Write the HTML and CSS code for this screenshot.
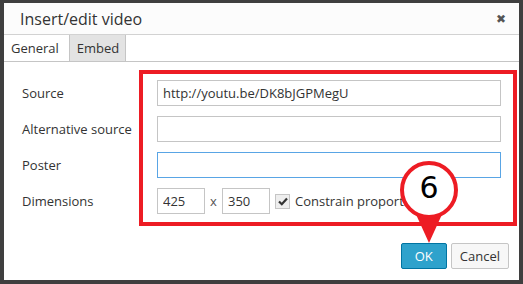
FILE: index.html
```html
<!DOCTYPE html>
<html lang="en">
  <head>
    <meta charset="UTF-8" />
    <title>Insert/edit video</title>
    <link rel="stylesheet" href="styles.css">
  </head>
  <body>
    <div class="dialog">
      <!-- Header -->
      <div class="dialog-head">
        <span class="dialog-title">Insert/edit video</span>
        <span class="close">&#10006;</span>
      </div>

      <!-- Tabs -->
      <div class="tabs">
        <span class="tab active">General</span>
        <span class="tab">Embed</span>
      </div>

      <!-- Form -->
      <div class="form">
        <div class="row">
          <label>Source</label>
          <input class="field" type="text" value="http://youtu.be/DK8bJGPMegU" />
        </div>
        <div class="row">
          <label>Alternative source</label>
          <input class="field" type="text" />
        </div>
        <div class="row">
          <label>Poster</label>
          <input class="field focus" type="text" />
        </div>
        <div class="row">
          <label>Dimensions</label>
          <input class="field small" type="text" value="425" />
          <span class="times">x</span>
          <input class="field small" type="text" value="350" />
          <span class="check">
            <svg width="10" height="9" viewBox="0 0 10 9">
              <path d="M1 4.5 L3.8 7.2 L9 1.5" fill="none" stroke="#333" stroke-width="2.2" />
            </svg>
          </span>
          <span class="check-label">Constrain proportions</span>
        </div>
      </div>

      <!-- Buttons -->
      <div class="foot">
        <button class="btn primary">OK</button>
        <button class="btn">Cancel</button>
      </div>

      <!-- Annotation -->
      <div class="mark"></div>
      <div class="callout">
        <svg width="64" height="90" viewBox="0 0 64 90">
          <path d="M17 52 L32 85 L47 52 Z" fill="#ed1c24" />
          <circle cx="32" cy="32" r="27" fill="#fff" stroke="#ed1c24" stroke-width="4" />
        </svg>
        <span class="callout-num">6</span>
      </div>
    </div>
  </body>
</html>
```

FILE: styles.css
```css
body {
  margin: 0;
  background: #3f3f3f;
  font-family: "Open Sans", "DejaVu Sans", sans-serif;
  font-size: 13px;
  color: #333;
}

.dialog {
  position: relative;
  margin: 3px 4px;
  width: 515px;
  height: 277px;
  background: #fff;
  display: flex;
  flex-direction: column;
}

.dialog-head {
  height: 31px;
  background: #fcfcfc;
  border-bottom: 1px solid #d2d2d2;
  display: flex;
  align-items: center;
  justify-content: space-between;
  padding: 0 13px 0 16px;
}

.dialog-title {
  font-size: 16px;
  color: #333;
}

.close {
  font-size: 12px;
  color: #555;
}

.tabs {
  display: flex;
  height: 26px;
  border-bottom: 1px solid #c5c5c5;
}

.tab {
  display: flex;
  align-items: center;
  padding: 0 6px 0 7px;
  background: #e3e3e3;
  border-right: 1px solid #c5c5c5;
  color: #333;
}

.tab.active {
  background: #fff;
  padding: 0 10px 0 7px;
}

.form {
  padding: 18px 18px 0 18px;
  display: flex;
  flex-direction: column;
  gap: 10px;
}

.row {
  display: flex;
  align-items: center;
  height: 26px;
}

.row label {
  width: 135px;
  color: #333;
}

.field {
  box-sizing: border-box;
  width: 344px;
  height: 26px;
  border: 1px solid #c5c5c5;
  padding: 0 5px;
  font-family: "Open Sans", "DejaVu Sans", sans-serif;
  font-size: 13px;
  color: #333;
  outline: none;
}

.field.focus {
  border-color: #59a5e5;
}

.field.small {
  width: 48px;
}

.times {
  width: 17px;
  text-align: center;
  color: #555;
}

.check {
  box-sizing: border-box;
  width: 15px;
  height: 15px;
  margin-left: 5px;
  border: 1px solid #c5c5c5;
  background: #eee;
  display: flex;
  align-items: center;
  justify-content: center;
}

.check-label {
  margin-left: 5px;
  white-space: nowrap;
}

.foot {
  margin-top: auto;
  display: flex;
  justify-content: flex-end;
  gap: 4px;
  padding: 0 10px 11px 0;
}

.btn {
  height: 26px;
  padding: 0 8px;
  border: 1px solid #c5c5c5;
  border-radius: 2px;
  background: #f7f7f7;
  font-family: "Open Sans", "DejaVu Sans", sans-serif;
  font-size: 13px;
  color: #333;
}

.btn.primary {
  width: 46px;
  background: #2ea2cc;
  border-color: #0074a2;
  color: #fff;
}

.mark {
  position: absolute;
  left: 135px;
  top: 67px;
  width: 370px;
  height: 148px;
  border: 4px solid #ed1c24;
}

.callout {
  position: absolute;
  left: 393px;
  top: 155px;
  width: 64px;
  height: 90px;
}

.callout svg {
  display: block;
}

.callout-num {
  position: absolute;
  left: 0;
  top: 12px;
  width: 64px;
  text-align: center;
  font-family: "DejaVu Sans", sans-serif;
  font-size: 30px;
  color: #000;
}
```
